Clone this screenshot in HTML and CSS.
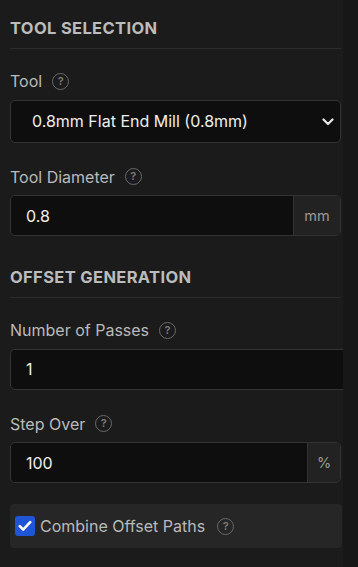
FILE: index.html
```html
<!DOCTYPE html>
<html>
<head>
<meta charset="utf-8">
<link rel="stylesheet" href="styles.css">
</head>
<body>
<div class="layout">
  <div class="panel">
    <div class="section-title first">TOOL SELECTION</div>

    <div class="field first-field">
      <div class="label">Tool <span class="help">?</span></div>
      <div class="select-wrap">
        <select class="select">
          <option>0.8mm Flat End Mill (0.8mm)</option>
        </select>
        <svg class="chevron" width="12" height="8" viewBox="0 0 12 8"><path d="M1.5 1.5 L6 6 L10.5 1.5" fill="none" stroke="#e8e8e8" stroke-width="2.2" stroke-linecap="round" stroke-linejoin="round"/></svg>
      </div>
    </div>

    <div class="field">
      <div class="label">Tool Diameter <span class="help">?</span></div>
      <div class="input-group">
        <input class="input" type="text" value="0.8">
        <span class="unit unit-mm">mm</span>
      </div>
    </div>

    <div class="section-title">OFFSET GENERATION</div>

    <div class="field first-field">
      <div class="label">Number of Passes <span class="help">?</span></div>
      <div class="input-group wide">
        <input class="input" type="text" value="1">
      </div>
    </div>

    <div class="field">
      <div class="label">Step Over <span class="help">?</span></div>
      <div class="input-group">
        <input class="input" type="text" value="100">
        <span class="unit unit-pct">%</span>
      </div>
    </div>

    <div class="check-row">
      <span class="checkbox">
        <svg width="14" height="12" viewBox="0 0 14 12"><path d="M1.8 6.2 L5.2 9.6 L12.2 2.2" fill="none" stroke="#ffffff" stroke-width="2.6" stroke-linecap="round" stroke-linejoin="round"/></svg>
      </span>
      <span class="check-label">Combine Offset Paths</span>
      <span class="help">?</span>
    </div>
  </div>
  <div class="rail"></div>
</div>
</body>
</html>
```

FILE: styles.css
```css
* { box-sizing: border-box; }
html, body {
  margin: 0;
  padding: 0;
  background: #1b1b1b;
  height: 100%;
}
body {
  font-family: Inter, "Noto Sans", "Liberation Sans", sans-serif;
  color: #bdbdbd;
  overflow: hidden;
}
.layout {
  display: flex;
  height: 567px;
}
.panel {
  width: 343px;
  padding: 0 2px 0 10px;
  overflow: hidden;
  background: #1b1b1b;
}
.rail {
  flex: 1;
  background: #171717;
}
.section-title {
  font-size: 16.5px;
  font-weight: 700;
  line-height: 20px;
  color: #bcbcbc;
  letter-spacing: 0.35px;
  padding-bottom: 10px;
  border-bottom: 1px solid #2c2c2c;
  margin-top: 31px;
}
.section-title.first { margin-top: 18px; }
.field { margin-top: 24px; }
.field.first-field { margin-top: 22px; }
.label {
  display: flex;
  align-items: center;
  gap: 10px;
  font-size: 16px;
  line-height: 20px;
  color: #bababa;
  margin-bottom: 8.5px;
}
.help {
  display: inline-flex;
  align-items: center;
  justify-content: center;
  width: 17px;
  height: 17px;
  border: 1.5px solid #6a6a6a;
  border-radius: 50%;
  color: #7a7a7a;
  font-size: 11px;
  font-weight: 600;
  line-height: 1;
}
.select-wrap {
  position: relative;
  height: 43px;
}
.select {
  appearance: none;
  -webkit-appearance: none;
  width: 100%;
  height: 43px;
  background: #0e0e0e;
  border: 1px solid #333;
  border-radius: 5px;
  color: #eeeeee;
  font-family: inherit;
  font-size: 16px;
  padding: 0 30px 0 21px;
  outline: none;
}
.chevron {
  position: absolute;
  right: 7px;
  top: 18px;
}
.input-group {
  display: flex;
  height: 41px;
  border: 1px solid #333;
  border-radius: 5px;
  background: #0e0e0e;
  overflow: hidden;
}
.input-group.wide {
  margin-right: -6px;
  border-radius: 5px 0 0 5px;
}
.input {
  flex: 1;
  min-width: 0;
  background: transparent;
  border: none;
  outline: none;
  color: #f0f0f0;
  font-family: inherit;
  font-size: 16px;
  padding: 0 0 0 15px;
}
.unit {
  display: flex;
  align-items: center;
  justify-content: center;
  background: #222;
  border-left: 1px solid #333;
  color: #9a9a9a;
  font-size: 14.5px;
}
.unit-mm { width: 47px; }
.unit-pct { width: 33px; }
.check-row {
  margin-top: 21px;
  height: 44px;
  background: #262626;
  border-radius: 4px;
  display: flex;
  align-items: center;
  padding-left: 5px;
  margin-right: -1px;
}
.checkbox {
  width: 20px;
  height: 20px;
  background: #1f56d8;
  border-radius: 3px;
  display: inline-flex;
  align-items: center;
  justify-content: center;
  margin-right: 5px;
}
.check-label {
  font-size: 16px;
  color: #bababa;
  margin-right: 12px;
}
```
